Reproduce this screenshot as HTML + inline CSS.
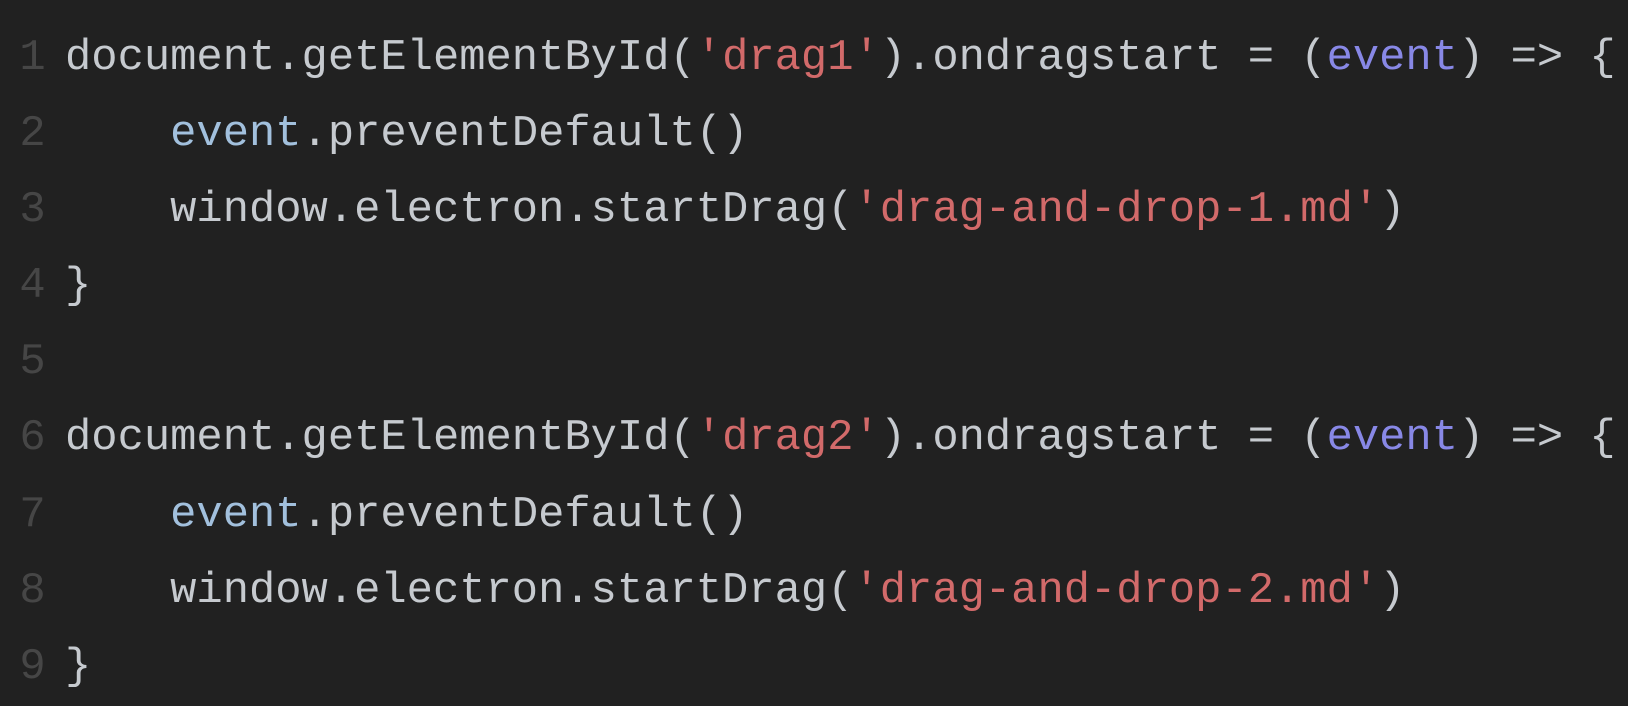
<!DOCTYPE html>
<html><head><style>
html,body{margin:0;padding:0;background:#212121;width:1628px;height:676px;overflow:hidden}
.c{position:absolute;top:21px;left:0;font-family:"Liberation Mono",monospace;font-size:43.8px;line-height:76.1px;color:#c6cacf;white-space:pre}
.n{display:inline-block;width:65px;text-align:center;color:#464646}
.s{color:#d26a6a}.p{color:#8888e6}.v{color:#a2c0dd}
</style></head><body><div class="c"><div><span class="n">1</span>document.getElementById(<span class="s">'drag1'</span>).ondragstart = (<span class="p">event</span>) =&gt; {</div><div><span class="n">2</span>    <span class="v">event</span>.preventDefault()</div><div><span class="n">3</span>    window.electron.startDrag(<span class="s">'drag-and-drop-1.md'</span>)</div><div><span class="n">4</span>}</div><div><span class="n">5</span></div><div><span class="n">6</span>document.getElementById(<span class="s">'drag2'</span>).ondragstart = (<span class="p">event</span>) =&gt; {</div><div><span class="n">7</span>    <span class="v">event</span>.preventDefault()</div><div><span class="n">8</span>    window.electron.startDrag(<span class="s">'drag-and-drop-2.md'</span>)</div><div><span class="n">9</span>}</div></div></body></html>
